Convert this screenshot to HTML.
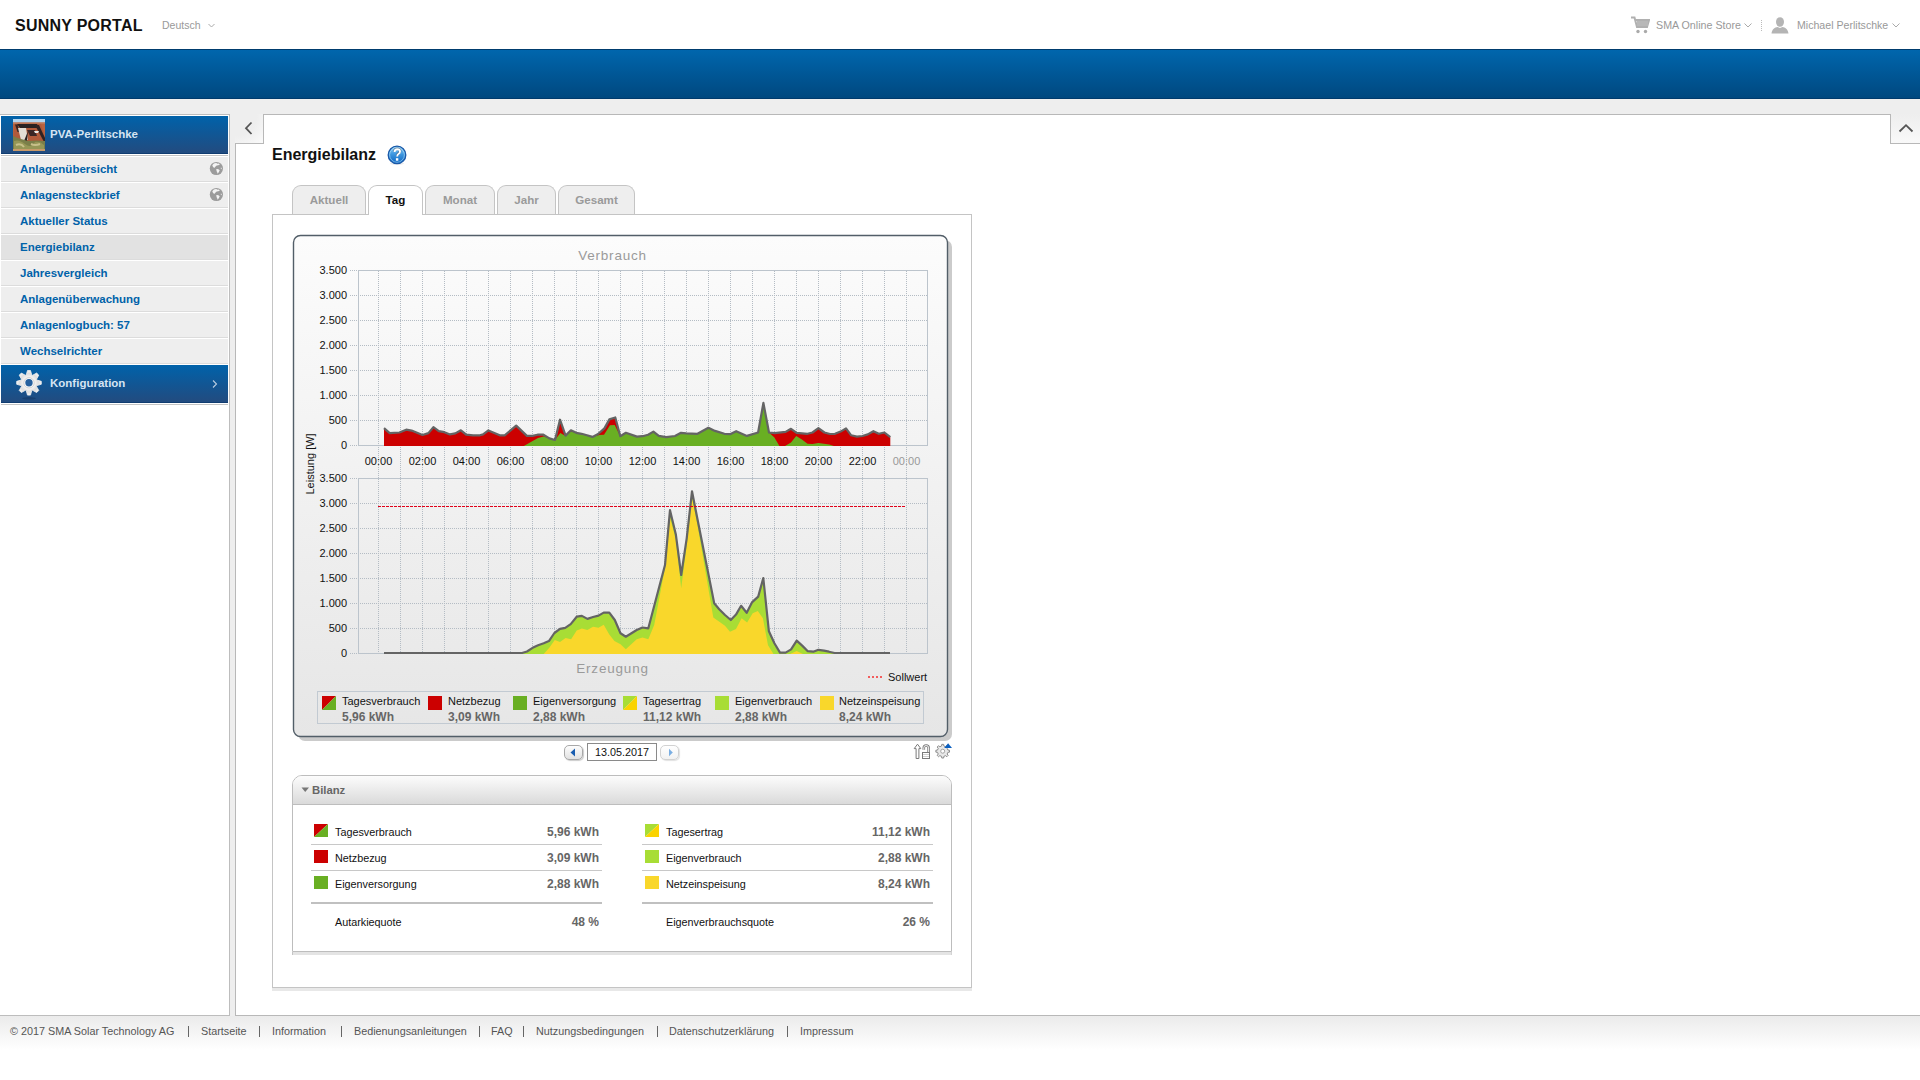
<!DOCTYPE html>
<html><head><meta charset="utf-8"><title>Sunny Portal</title>
<style>
*{box-sizing:border-box}
html,body{margin:0;padding:0;width:1920px;height:1080px;overflow:hidden;background:#fff;font-family:"Liberation Sans", sans-serif;}
.abs{position:absolute}
.yl{left:300px;width:47px;text-align:right;font-size:11px;line-height:12px;color:#111}
.xl{top:455px;width:40px;text-align:center;font-size:11px;line-height:12px}
.side a{position:absolute;left:20px;font-size:11.5px;font-weight:bold;color:#0062a9;text-decoration:none;line-height:14px}
.row{position:absolute;left:1px;width:227px;height:25px;background:#eeeeee;border-bottom:1px solid #dcdcdc}
.tab{position:absolute;top:185px;height:29px;border:1px solid #c4c4c4;border-bottom:none;border-radius:9px 9px 0 0;background:#eeeeee;font-size:11.6px;font-weight:bold;color:#9a9a9a;text-align:center;line-height:28px}
.lg{position:absolute;top:696px;width:14px;height:14px}
.lt{position:absolute;top:695px;font-size:11px;line-height:12px;color:#111;white-space:nowrap}
.lv{position:absolute;top:711px;font-size:12px;font-weight:bold;line-height:12px;color:#666;white-space:nowrap}
.bt{position:absolute;font-size:10.8px;line-height:12px;color:#111;white-space:nowrap}
.bv{position:absolute;font-size:12px;font-weight:bold;line-height:12px;color:#666;text-align:right;white-space:nowrap}
.bi{position:absolute;width:14px;height:13px}
.bl{position:absolute;height:1px;background:#c8c8c8}
.ft{position:absolute;top:1025px;font-size:10.8px;line-height:12px;color:#555;white-space:nowrap}
</style></head><body>

<!-- header -->
<div class="abs" style="left:15px;top:18px;font-size:16px;line-height:16px;font-weight:bold;color:#111;letter-spacing:0.25px">SUNNY PORTAL</div>
<div class="abs" style="left:162px;top:19px;font-size:10.5px;line-height:12px;color:#999">Deutsch</div>
<svg class="abs" style="left:206px;top:22px" width="10" height="8"><path d="M2.5 2L5.5 5L8.5 2" stroke="#aaa" stroke-width="1" fill="none"/></svg>

<svg class="abs" style="left:1631px;top:16px" width="19" height="18" viewBox="0 0 19 18"><path d="M0 1.5H3.5L6 11H16L18 4H5" stroke="#b0b0b0" stroke-width="2" fill="none"/><rect x="6" y="5" width="11" height="5" fill="#b8b8b8"/><circle cx="7" cy="15.5" r="1.7" fill="#aaa"/><circle cx="14.5" cy="15.5" r="1.7" fill="#aaa"/></svg>
<div class="abs" style="left:1656px;top:19px;font-size:10.7px;line-height:12px;color:#999">SMA Online Store</div>
<svg class="abs" style="left:1743px;top:21px" width="10" height="8"><path d="M1.5 2.5L5 6L8.5 2.5" stroke="#aaa" stroke-width="1" fill="none"/></svg>
<div class="abs" style="left:1761px;top:20px;width:1px;height:11px;border-left:1px dotted #bbb"></div>
<svg class="abs" style="left:1771px;top:17px" width="18" height="17" viewBox="0 0 18 17"><ellipse cx="9" cy="5" rx="4" ry="4.8" fill="#b4b4b4"/><path d="M0.5 16.5C1 12 4 10.5 6.5 10L9 11L11.5 10C14 10.5 17 12 17.5 16.5Z" fill="#b4b4b4"/></svg>
<div class="abs" style="left:1797px;top:19px;font-size:10.6px;line-height:12px;color:#999">Michael Perlitschke</div>
<svg class="abs" style="left:1891px;top:21px" width="10" height="8"><path d="M1.5 2.5L5 6L8.5 2.5" stroke="#aaa" stroke-width="1" fill="none"/></svg>

<!-- blue bar -->
<div class="abs" style="left:0;top:49px;width:1920px;height:50px;background:linear-gradient(#0066ad,#00487f);border-top:1px solid #003c6e;border-bottom:1px solid #003a6c"></div>
<!-- gray page -->
<div class="abs" style="left:0;top:99px;width:1920px;height:917px;background:#eeeeee"></div>

<!-- sidebar -->
<div class="abs side" style="left:0;top:114px;width:230px;height:902px;background:#fff;border-top:1px solid #bdbdbd;border-right:1px solid #bdbdbd;border-bottom:1px solid #bdbdbd">
</div>
<div class="abs" style="left:1px;top:116px;width:227px;height:38px;background:linear-gradient(#0062aa,#224b7f);border-bottom:1px solid #103c70"></div>
<svg class="abs" style="left:13px;top:119px" width="32" height="32" viewBox="0 0 32 32">
<defs><filter id="bl" x="0" y="0" width="1" height="1"><feGaussianBlur stdDeviation="0.45"/></filter></defs><g filter="url(#bl)">
<rect width="32" height="32" fill="#b9643f"/><rect width="32" height="3.5" fill="#b4d6f0"/>
<path d="M0 3.5H32V5Q20 4 0 5Z" fill="#c07a5a"/>
<path d="M1 5H28L32 18V22L0 24Z" fill="#b15a3a"/>
<path d="M2 5.5H4.5L7 13H4.5Z" fill="#3a2624"/>
<path d="M4 5H24L26 9H7Z" fill="#2a2020"/>
<path d="M22 6H26L32 19V23H31Z" fill="#302424"/>
<path d="M14 11H22L24 17H17Z" fill="#3a2828"/>
<path d="M5 9H13L15 21H8Z" fill="#e2ddd4"/><path d="M15 12L14 22H11Z" fill="#2a2222"/>
<path d="M21 12H26L25 14H22Z" fill="#eeeae6"/>
<path d="M0 17Q4 19 8 20L15 22Q23 21 32 22V32H0Z" fill="#7a7e48"/>
<path d="M1 22Q6 20 12 25T22 23Q27 22 31 26V30H1Z" fill="#959656"/>
<path d="M3 26Q8 24 11 28M18 25Q22 27 27 25" stroke="#c8c08a" stroke-width="2" fill="none"/>
<rect y="30" width="32" height="2" fill="#c89a6a"/>
</g></svg>
<div class="abs" style="left:50px;top:127px;font-size:11.5px;font-weight:bold;line-height:14px;color:#d6e4f2">PVA-Perlitschke</div>
<div class="abs" style="left:1px;top:155px;width:227px;height:1px;background:#c4c4c4"></div>
<div class="row" style="top:157px;background:#eeeeee"></div>
<div class="side"><a style="top:162px">Anlagenübersicht</a></div>
<svg class="abs" style="left:209px;top:161px" width="15" height="15" viewBox="0 0 15 15"><circle cx="7.4" cy="7.5" r="6.6" fill="#9c9c9c"/><path d="M3.3 4.2Q4.6 1.9 7.2 2L8.6 2.7Q10 2.2 10.9 3.4L9.3 4.3Q7.4 4.3 6.8 5.2L5.2 6.9Q3.6 5.8 3.3 4.2Z M7.3 8Q9.1 7.6 10.7 9.2Q10.1 11.2 8.4 12.8Q8.5 11 7.6 10.2Z M11.9 6.6L12.7 6.9L12.6 8.2L11.8 7.8Z" fill="#f4f4f4"/></svg>
<div class="row" style="top:183px;background:#eeeeee"></div>
<div class="side"><a style="top:188px">Anlagensteckbrief</a></div>
<svg class="abs" style="left:209px;top:187px" width="15" height="15" viewBox="0 0 15 15"><circle cx="7.4" cy="7.5" r="6.6" fill="#9c9c9c"/><path d="M3.3 4.2Q4.6 1.9 7.2 2L8.6 2.7Q10 2.2 10.9 3.4L9.3 4.3Q7.4 4.3 6.8 5.2L5.2 6.9Q3.6 5.8 3.3 4.2Z M7.3 8Q9.1 7.6 10.7 9.2Q10.1 11.2 8.4 12.8Q8.5 11 7.6 10.2Z M11.9 6.6L12.7 6.9L12.6 8.2L11.8 7.8Z" fill="#f4f4f4"/></svg>
<div class="row" style="top:209px;background:#eeeeee"></div>
<div class="side"><a style="top:214px">Aktueller Status</a></div>
<div class="row" style="top:235px;background:#e2e2e2"></div>
<div class="side"><a style="top:240px">Energiebilanz</a></div>
<div class="row" style="top:261px;background:#eeeeee"></div>
<div class="side"><a style="top:266px">Jahresvergleich</a></div>
<div class="row" style="top:287px;background:#eeeeee"></div>
<div class="side"><a style="top:292px">Anlagenüberwachung</a></div>
<div class="row" style="top:313px;background:#eeeeee"></div>
<div class="side"><a style="top:318px">Anlagenlogbuch: 57</a></div>
<div class="row" style="top:339px;background:#eeeeee"></div>
<div class="side"><a style="top:344px">Wechselrichter</a></div>
<div class="abs" style="left:1px;top:365px;width:227px;height:38px;background:linear-gradient(#0062aa,#224b7f);border-bottom:1px solid #103c70"></div>
<svg class="abs" style="left:14px;top:367px" width="30" height="34" viewBox="14 367 30 34"><defs><radialGradient id="gr" cx="0.5" cy="0.5" r="0.5"><stop offset="0.3" stop-color="#ffffff"/><stop offset="0.75" stop-color="#dedede"/><stop offset="1" stop-color="#f4f4f4"/></radialGradient></defs><ellipse cx="29" cy="398.3" rx="7" ry="1.3" fill="#0c2a50" opacity="0.35"/><path d="M26.23 374.98 L27.52 370.49 L30.48 370.49 L31.77 374.98 L32.58 375.31 L36.66 373.05 L38.75 375.14 L36.49 379.22 L36.82 380.03 L41.31 381.32 L41.31 384.28 L36.82 385.57 L36.49 386.38 L38.75 390.46 L36.66 392.55 L32.58 390.29 L31.77 390.62 L30.48 395.11 L27.52 395.11 L26.23 390.62 L25.42 390.29 L21.34 392.55 L19.25 390.46 L21.51 386.38 L21.18 385.57 L16.69 384.28 L16.69 381.32 L21.18 380.03 L21.51 379.22 L19.25 375.14 L21.34 373.05 L25.42 375.31Z" fill="url(#gr)" stroke="#f0f0f0" stroke-width="0.8" stroke-linejoin="round"/><circle cx="29" cy="382.8" r="3.7" fill="#25609e"/><circle cx="29" cy="382.8" r="5.2" fill="none" stroke="#c8c8c8" stroke-width="0.8"/></svg>
<div class="abs" style="left:50px;top:376px;font-size:11.5px;font-weight:bold;line-height:14px;color:#d6e4f2">Konfiguration</div>
<svg class="abs" style="left:211px;top:379px" width="8" height="10"><path d="M2 1.5L5.5 5L2 8.5" stroke="#b8cce0" stroke-width="1.1" fill="none"/></svg>
<div class="abs" style="left:1px;top:404px;width:227px;height:1px;background:#c4c4c4"></div>

<!-- content panel -->
<div class="abs" style="left:235px;top:143px;width:1685px;height:873px;background:#fff;border-left:1px solid #b8b8b8;border-bottom:1px solid #b8b8b8"></div>
<div class="abs" style="left:263px;top:114px;width:1628px;height:30px;background:#fff;border-top:1px solid #b8b8b8;border-left:1px solid #b8b8b8;border-right:1px solid #b8b8b8"></div>
<div class="abs" style="left:235px;top:114px;width:28px;height:30px;background:radial-gradient(circle at 0 0,#eeeeee 55%,#fdfdfd 110%);border-bottom:1px solid #b8b8b8"></div>
<svg class="abs" style="left:243px;top:121px" width="12" height="15"><path d="M8.5 1.5L3 7.2L8.5 13" stroke="#555" stroke-width="1.8" fill="none"/></svg>
<div class="abs" style="left:1891px;top:114px;width:29px;height:30px;background:linear-gradient(#eeeeee,#f9f9f9);border-bottom:1px solid #b8b8b8"></div>
<svg class="abs" style="left:1898px;top:122px" width="16" height="12"><path d="M1.5 9.5L8 3.2L14.5 9.5" stroke="#555" stroke-width="1.8" fill="none"/></svg>

<!-- title -->
<div class="abs" style="left:272px;top:146px;font-size:16px;line-height:18px;font-weight:bold;color:#111">Energiebilanz</div>
<svg class="abs" style="left:382px;top:140px" width="30" height="30" viewBox="382 140 30 30">
<defs><linearGradient id="hg" x1="0" y1="0" x2="0" y2="1"><stop offset="0" stop-color="#8fd0f8"/><stop offset="0.45" stop-color="#3f98e0"/><stop offset="1" stop-color="#0a62c0"/></linearGradient></defs>
<ellipse cx="397" cy="163.5" rx="7" ry="1.5" fill="#000" opacity="0.08"/>
<circle cx="397" cy="154.9" r="8.8" fill="url(#hg)" stroke="#1958a8" stroke-width="1.3"/>
<circle cx="397" cy="154.9" r="7.4" fill="none" stroke="#c8f0ff" stroke-width="0.9" opacity="0.55"/>
<path d="M394.6 152Q394.6 149.3 397.3 149.3Q400 149.3 400 151.6Q400 153.2 398.4 154Q397.2 154.7 397.2 156.6" stroke="#334" stroke-width="2.6" fill="none" opacity="0.55" transform="translate(0,-0.5)"/>
<path d="M394.6 152Q394.6 149.3 397.3 149.3Q400 149.3 400 151.6Q400 153.2 398.4 154Q397.2 154.7 397.2 156.6" stroke="#fff" stroke-width="1.9" fill="none"/>
<rect x="395.9" y="158.2" width="2.4" height="2.5" fill="#fff"/>
</svg>

<!-- tab panel -->
<div class="abs" style="left:272px;top:214px;width:700px;height:774px;background:#fff;border:1px solid #c4c4c4"></div>
<div class="abs" style="left:272px;top:988px;width:700px;height:3px;background:#e8e8e8"></div>
<div class="tab" style="left:292px;width:74px">Aktuell</div>
<div class="tab" style="left:368px;width:55px;background:#fff;color:#111;height:30px">Tag</div>
<div class="abs" style="left:369px;top:214px;width:53px;height:1px;background:#fff"></div>
<div class="tab" style="left:425px;width:70px">Monat</div>
<div class="tab" style="left:497px;width:59px">Jahr</div>
<div class="tab" style="left:558px;width:77px">Gesamt</div>
<svg class="abs" style="left:0;top:0" width="1920" height="1080" viewBox="0 0 1920 1080">
<defs><linearGradient id="pg" x1="0" y1="0" x2="0" y2="1"><stop offset="0" stop-color="#fcfcfc"/><stop offset="1" stop-color="#e6e6e6"/></linearGradient></defs>
<rect x="298" y="240" width="654" height="501" rx="7" fill="#cbcbcb"/>
<rect x="293.5" y="235.5" width="654" height="501" rx="7" fill="url(#pg)" stroke="#525e68" stroke-width="1.4"/>
<rect x="358.5" y="270.5" width="569" height="175" fill="none" stroke="#bcc4cc" stroke-width="1"/>
<rect x="358.5" y="478.5" width="569" height="175" fill="none" stroke="#bcc4cc" stroke-width="1"/>
<path d="M360 295.5H927 M360 320.5H927 M360 345.5H927 M360 370.5H927 M360 395.5H927 M360 420.5H927 M350 270.5H358 M350 295.5H358 M350 320.5H358 M350 345.5H358 M350 370.5H358 M350 395.5H358 M350 420.5H358 M350 445.5H358 M360 503.5H927 M360 528.5H927 M360 553.5H927 M360 578.5H927 M360 603.5H927 M360 628.5H927 M350 478.5H358 M350 503.5H358 M350 528.5H358 M350 553.5H358 M350 578.5H358 M350 603.5H358 M350 628.5H358 M350 653.5H358 M378.5 271V653 M400.5 271V653 M422.5 271V653 M444.5 271V653 M466.5 271V653 M488.5 271V653 M510.5 271V653 M532.5 271V653 M554.5 271V653 M576.5 271V653 M598.5 271V653 M620.5 271V653 M642.5 271V653 M664.5 271V653 M686.5 271V653 M708.5 271V653 M730.5 271V653 M752.5 271V653 M774.5 271V653 M796.5 271V653 M818.5 271V653 M840.5 271V653 M862.5 271V653 M884.5 271V653 M906.5 271V653" stroke="#b4bcc4" stroke-width="1" stroke-dasharray="1 1" fill="none"/>
<polygon points="384.0,446.0 384.0,428.1 389.7,433.1 399.4,432.5 406.2,429.7 411.6,430.6 422.5,435.0 428.4,433.1 433.4,427.2 438.8,431.2 444.4,432.2 450.0,434.4 455.3,433.4 460.9,430.3 466.2,434.7 473.1,435.3 480.0,435.3 483.1,434.4 488.4,430.4 499.7,435.3 504.7,435.3 516.2,425.6 526.9,435.9 532.5,435.9 537.5,434.7 543.4,434.7 549.4,438.4 555.0,440.0 560.0,419.7 565.6,435.6 570.9,430.3 576.2,432.8 581.6,433.8 586.9,435.3 592.5,436.9 598.1,434.0 604.4,428.4 609.4,419.4 615.3,417.5 620.3,436.2 625.9,432.8 636.9,436.6 642.5,436.2 648.1,434.7 653.4,431.6 658.8,435.9 666.2,437.2 675.0,436.0 681.0,432.8 686.2,433.4 697.5,433.8 708.4,427.8 715.0,430.9 724.4,433.8 730.6,434.1 736.2,431.2 746.9,435.9 758.1,432.5 763.4,402.9 769.0,432.5 774.7,433.1 785.6,431.9 791.0,428.8 796.6,432.8 807.5,433.8 812.5,432.5 818.4,428.1 824.4,432.5 830.0,434.0 835.0,433.8 840.6,431.6 846.0,428.4 851.2,435.3 856.9,436.6 862.5,436.0 867.8,434.4 873.4,431.2 878.8,433.8 884.4,432.5 890.3,437.2 890.3,446.0" fill="#cc0000"/>
<polygon points="384.0,446.0 384.0,446.0 520.0,446.0 523.8,446.0 538.0,438.1 543.8,436.6 549.4,438.4 555.0,440.0 560.3,433.1 565.6,436.0 570.9,431.6 576.2,432.8 581.6,433.8 586.9,435.3 592.5,436.9 599.4,434.9 604.0,434.7 610.0,425.3 614.7,425.0 620.3,436.6 625.9,432.8 636.9,436.6 642.5,436.2 648.1,434.7 653.4,431.6 658.8,435.9 666.2,437.2 675.0,436.0 681.0,432.8 686.2,433.4 697.5,433.8 708.4,427.8 715.0,430.9 724.4,433.8 730.6,434.1 736.2,431.2 746.9,435.9 758.1,432.5 763.4,405.0 769.0,432.5 774.4,437.5 779.4,446.0 785.0,446.0 791.0,442.5 796.2,436.0 801.9,439.4 807.5,443.8 812.5,444.0 818.4,443.1 829.4,444.4 833.8,446.0 890.3,446.0 890.3,446.0" fill="#69af23"/>
<polyline points="384.0,428.1 389.7,433.1 399.4,432.5 406.2,429.7 411.6,430.6 422.5,435.0 428.4,433.1 433.4,427.2 438.8,431.2 444.4,432.2 450.0,434.4 455.3,433.4 460.9,430.3 466.2,434.7 473.1,435.3 480.0,435.3 483.1,434.4 488.4,430.4 499.7,435.3 504.7,435.3 516.2,425.6 526.9,435.9 532.5,435.9 537.5,434.7 543.4,434.7 549.4,438.4 555.0,440.0 560.0,419.7 565.6,435.6 570.9,430.3 576.2,432.8 581.6,433.8 586.9,435.3 592.5,436.9 598.1,434.0 604.4,428.4 609.4,419.4 615.3,417.5 620.3,436.2 625.9,432.8 636.9,436.6 642.5,436.2 648.1,434.7 653.4,431.6 658.8,435.9 666.2,437.2 675.0,436.0 681.0,432.8 686.2,433.4 697.5,433.8 708.4,427.8 715.0,430.9 724.4,433.8 730.6,434.1 736.2,431.2 746.9,435.9 758.1,432.5 763.4,402.9 769.0,432.5 774.7,433.1 785.6,431.9 791.0,428.8 796.6,432.8 807.5,433.8 812.5,432.5 818.4,428.1 824.4,432.5 830.0,434.0 835.0,433.8 840.6,431.6 846.0,428.4 851.2,435.3 856.9,436.6 862.5,436.0 867.8,434.4 873.4,431.2 878.8,433.8 884.4,432.5 890.3,437.2" fill="none" stroke="#646464" stroke-width="2.2" stroke-linejoin="round"/>
<polygon points="384.0,654.0 384.0,653.0 522.0,653.0 527.0,651.5 532.6,647.8 538.1,645.2 543.7,643.3 548.9,641.1 554.4,633.0 560.0,628.9 565.2,627.8 570.7,624.1 576.7,616.7 581.9,615.9 587.4,618.9 593.0,617.0 598.5,615.6 603.7,612.6 609.3,612.6 614.8,620.0 620.5,633.3 625.8,636.7 636.7,630.0 642.5,627.5 648.3,628.3 665.0,565.0 670.0,510.2 675.8,534.2 681.2,575.0 686.7,538.3 692.0,491.3 697.5,519.2 714.2,603.3 719.2,609.2 725.0,615.0 730.8,620.0 736.0,614.6 741.1,605.8 746.7,612.8 752.2,602.1 758.2,596.6 763.3,578.0 768.9,631.3 774.4,643.3 780.0,652.6 785.6,652.6 791.1,649.4 796.7,640.6 802.2,645.6 807.8,651.2 813.3,651.7 818.4,649.8 824.0,650.7 829.0,651.7 834.6,653.0 890.0,653.0 890.0,654.0" fill="#a8dd35"/>
<polygon points="384.0,654.0 384.0,654.0 543.7,654.0 549.3,647.8 554.8,640.0 560.0,641.9 565.6,638.1 571.1,639.3 576.7,630.4 581.9,628.5 587.4,630.0 593.0,626.7 598.5,627.8 603.7,624.8 609.3,634.4 614.4,641.1 620.5,644.2 625.8,649.2 636.7,639.2 642.5,637.5 648.3,639.2 654.2,625.0 665.0,568.0 670.0,517.5 675.8,539.2 681.2,588.3 686.7,545.0 692.0,498.0 697.5,525.0 713.3,617.5 725.0,625.8 730.0,631.7 736.0,629.0 741.6,618.3 747.1,622.5 752.7,613.2 757.8,611.0 762.9,618.3 768.0,645.2 773.5,654.0 790.0,654.0 796.7,651.0 803.0,654.0 890.0,654.0 890.0,654.0" fill="#f9d72b"/>
<polyline points="384.0,653.0 522.0,653.0 527.0,651.5 532.6,647.8 538.1,645.2 543.7,643.3 548.9,641.1 554.4,633.0 560.0,628.9 565.2,627.8 570.7,624.1 576.7,616.7 581.9,615.9 587.4,618.9 593.0,617.0 598.5,615.6 603.7,612.6 609.3,612.6 614.8,620.0 620.5,633.3 625.8,636.7 636.7,630.0 642.5,627.5 648.3,628.3 665.0,565.0 670.0,510.2 675.8,534.2 681.2,575.0 686.7,538.3 692.0,491.3 697.5,519.2 714.2,603.3 719.2,609.2 725.0,615.0 730.8,620.0 736.0,614.6 741.1,605.8 746.7,612.8 752.2,602.1 758.2,596.6 763.3,578.0 768.9,631.3 774.4,643.3 780.0,652.6 785.6,652.6 791.1,649.4 796.7,640.6 802.2,645.6 807.8,651.2 813.3,651.7 818.4,649.8 824.0,650.7 829.0,651.7 834.6,653.0 890.0,653.0" fill="none" stroke="#646464" stroke-width="2.2" stroke-linejoin="round"/>
<path d="M378 506.5H906" stroke="#e00018" stroke-width="1.2" stroke-dasharray="3 1"/>
<path d="M868 677H884" stroke="#f25c5c" stroke-width="2" stroke-dasharray="2 2"/>
</svg>
<div class="abs yl" style="top:264px">3.500</div>
<div class="abs yl" style="top:289px">3.000</div>
<div class="abs yl" style="top:314px">2.500</div>
<div class="abs yl" style="top:339px">2.000</div>
<div class="abs yl" style="top:364px">1.500</div>
<div class="abs yl" style="top:389px">1.000</div>
<div class="abs yl" style="top:414px">500</div>
<div class="abs yl" style="top:439px">0</div>
<div class="abs yl" style="top:472px">3.500</div>
<div class="abs yl" style="top:497px">3.000</div>
<div class="abs yl" style="top:522px">2.500</div>
<div class="abs yl" style="top:547px">2.000</div>
<div class="abs yl" style="top:572px">1.500</div>
<div class="abs yl" style="top:597px">1.000</div>
<div class="abs yl" style="top:622px">500</div>
<div class="abs yl" style="top:647px">0</div>
<div class="abs xl" style="left:358.5px;color:#111">00:00</div>
<div class="abs xl" style="left:402.5px;color:#111">02:00</div>
<div class="abs xl" style="left:446.5px;color:#111">04:00</div>
<div class="abs xl" style="left:490.5px;color:#111">06:00</div>
<div class="abs xl" style="left:534.5px;color:#111">08:00</div>
<div class="abs xl" style="left:578.5px;color:#111">10:00</div>
<div class="abs xl" style="left:622.5px;color:#111">12:00</div>
<div class="abs xl" style="left:666.5px;color:#111">14:00</div>
<div class="abs xl" style="left:710.5px;color:#111">16:00</div>
<div class="abs xl" style="left:754.5px;color:#111">18:00</div>
<div class="abs xl" style="left:798.5px;color:#111">20:00</div>
<div class="abs xl" style="left:842.5px;color:#111">22:00</div>
<div class="abs xl" style="left:886.5px;color:#999">00:00</div>

<div class="abs" style="left:555px;top:248px;width:115px;text-align:center;font-size:13.5px;line-height:16px;color:#9a9a9a;letter-spacing:0.8px">Verbrauch</div>
<div class="abs" style="left:555px;top:661px;width:115px;text-align:center;font-size:13.5px;line-height:16px;color:#9a9a9a;letter-spacing:0.8px">Erzeugung</div>
<div class="abs" style="left:279px;top:458px;width:61px;text-align:center;font-size:11px;line-height:12px;color:#111;transform:rotate(-90deg);white-space:nowrap">Leistung [W]</div>
<div class="abs" style="left:888px;top:671px;font-size:11px;line-height:12px;color:#111">Sollwert</div>

<!-- legend -->
<div class="abs" style="left:317px;top:691px;width:607px;height:33px;border:1px solid #c2cad2"></div>
<svg class="lg" style="left:322px" viewBox="0 0 14 14"><path d="M0 0H14L0 14Z" fill="#cc0000"/><path d="M14 0V14H0Z" fill="#69af23"/></svg>
<div class="lt" style="left:342px">Tagesverbrauch</div><div class="lv" style="left:342px">5,96 kWh</div>
<div class="lg" style="left:428px;background:#cc0000"></div>
<div class="lt" style="left:448px">Netzbezug</div><div class="lv" style="left:448px">3,09 kWh</div>
<div class="lg" style="left:513px;background:#69af23"></div>
<div class="lt" style="left:533px">Eigenversorgung</div><div class="lv" style="left:533px">2,88 kWh</div>
<svg class="lg" style="left:623px" viewBox="0 0 14 14"><path d="M0 0H14L0 14Z" fill="#a8dd35"/><path d="M14 0V14H0Z" fill="#fad300"/></svg>
<div class="lt" style="left:643px">Tagesertrag</div><div class="lv" style="left:643px">11,12 kWh</div>
<div class="lg" style="left:715px;background:#a8dd35"></div>
<div class="lt" style="left:735px">Eigenverbrauch</div><div class="lv" style="left:735px">2,88 kWh</div>
<div class="lg" style="left:820px;background:#f9d72b"></div>
<div class="lt" style="left:839px">Netzeinspeisung</div><div class="lv" style="left:839px">8,24 kWh</div>

<!-- date nav -->
<div class="abs" style="left:564px;top:745px;width:19px;height:15px;border:1px solid #a8a8a8;border-radius:5px;background:linear-gradient(#fdfdfd,#e2e2e2);box-shadow:1px 1px 1px #ccc"></div>
<svg class="abs" style="left:569px;top:748px" width="8" height="9"><path d="M6 0.5V8.5L1.5 4.5Z" fill="#1a5eb0"/></svg>
<div class="abs" style="left:587px;top:743px;width:70px;height:18px;border:1px solid #8a8a8a;background:#fff;font-size:10.8px;line-height:16px;color:#111;text-align:center">13.05.2017</div>
<div class="abs" style="left:660px;top:745px;width:19px;height:15px;border:1px solid #d2d2d2;border-radius:5px;background:linear-gradient(#ffffff,#f2f2f2);box-shadow:1px 1px 1px #e2e2e2"></div>
<svg class="abs" style="left:667px;top:748px" width="8" height="9"><path d="M2 0.8V8.2L5.8 4.5Z" fill="#7aaee2"/></svg>
<svg class="abs" style="left:0;top:0" width="1920" height="1080" viewBox="0 0 1920 1080">
<path d="M917.5 744.2L920.8 748.6H918.9V758.5H916.1V748.6H914.2Z" fill="#fff" stroke="#7a7a7a" stroke-width="1"/>
<path d="M923.8 749.8V747.8Q923.8 745.5 926.2 745.5Q928.6 745.5 928.6 747.8V752" fill="none" stroke="#7a7a7a" stroke-width="2.6"/>
<path d="M923.8 749.8V747.8Q923.8 745.5 926.2 745.5Q928.6 745.5 928.6 747.8V752" fill="none" stroke="#fff" stroke-width="0.9"/>
<rect x="922.5" y="752.5" width="7" height="6" fill="#fff" stroke="#7a7a7a" stroke-width="1"/>
<path d="M923 754.5H929M923 756.5H929" stroke="#cfcfcf" stroke-width="1"/>
<path d="M947.88 750.06 L949.53 750.25 L949.53 752.15 L947.88 752.34 L947.16 754.06 L948.20 755.36 L946.86 756.70 L945.56 755.66 L943.84 756.38 L943.65 758.03 L941.75 758.03 L941.56 756.38 L939.84 755.66 L938.54 756.70 L937.20 755.36 L938.24 754.06 L937.52 752.34 L935.87 752.15 L935.87 750.25 L937.52 750.06 L938.24 748.34 L937.20 747.04 L938.54 745.70 L939.84 746.74 L941.56 746.02 L941.75 744.37 L943.65 744.37 L943.84 746.02 L945.56 746.74 L946.86 745.70 L948.20 747.04 L947.16 748.34Z" fill="#e8e8e8" stroke="#8c8c8c" stroke-width="1" stroke-linejoin="round"/><circle cx="942.7" cy="751.2" r="2" fill="#fff" stroke="#9a9a9a" stroke-width="0.9"/>
<path d="M944.2 747.9L948.1 743.2L952 747.9Z" fill="#0a5fc0"/>
</svg>

<!-- bilanz -->
<div class="abs" style="left:292px;top:775px;width:660px;height:177px;border:1px solid #bdbdbd;border-radius:10px 10px 0 0;background:#fff;overflow:hidden">
  <div style="height:29px;background:linear-gradient(#fcfcfc,#dadada);border-bottom:1px solid #bdbdbd"></div>
</div>
<div class="abs" style="left:292px;top:952px;width:660px;height:3px;background:#e4e4e4;border-left:1px solid #c4c4c4;border-right:1px solid #d4d4d4"></div>
<svg class="abs" style="left:301px;top:787px" width="9" height="6"><path d="M0.5 0.5H8L4.2 5Z" fill="#777"/></svg>
<div class="abs" style="left:312px;top:784px;font-size:11.3px;font-weight:bold;line-height:13px;color:#666">Bilanz</div>
<svg class="bi" style="left:314px;top:824px" viewBox="0 0 14 13"><path d="M0 0H14L0 13Z" fill="#cc0000"/><path d="M14 0V13H0Z" fill="#69af23"/></svg>
<div class="bt" style="left:335px;top:826px">Tagesverbrauch</div>
<div class="bv" style="left:499px;width:100px;top:826px">5,96 kWh</div>
<svg class="bi" style="left:645px;top:824px" viewBox="0 0 14 13"><path d="M0 0H14L0 13Z" fill="#a8dd35"/><path d="M14 0V13H0Z" fill="#fad300"/></svg>
<div class="bt" style="left:666px;top:826px">Tagesertrag</div>
<div class="bv" style="left:830px;width:100px;top:826px">11,12 kWh</div>
<div class="bi" style="left:314px;top:850px;background:#cc0000"></div>
<div class="bt" style="left:335px;top:852px">Netzbezug</div>
<div class="bv" style="left:499px;width:100px;top:852px">3,09 kWh</div>
<div class="bi" style="left:645px;top:850px;background:#a8dd35"></div>
<div class="bt" style="left:666px;top:852px">Eigenverbrauch</div>
<div class="bv" style="left:830px;width:100px;top:852px">2,88 kWh</div>
<div class="bi" style="left:314px;top:876px;background:#69af23"></div>
<div class="bt" style="left:335px;top:878px">Eigenversorgung</div>
<div class="bv" style="left:499px;width:100px;top:878px">2,88 kWh</div>
<div class="bi" style="left:645px;top:876px;background:#f9d72b"></div>
<div class="bt" style="left:666px;top:878px">Netzeinspeisung</div>
<div class="bv" style="left:830px;width:100px;top:878px">8,24 kWh</div>
<div class="bt" style="left:335px;top:916px">Autarkiequote</div>
<div class="bv" style="left:499px;width:100px;top:916px">48 %</div>
<div class="bt" style="left:666px;top:916px">Eigenverbrauchsquote</div>
<div class="bv" style="left:830px;width:100px;top:916px">26 %</div>
<div class="bl" style="left:311px;top:844px;width:291px"></div>
<div class="bl" style="left:642px;top:844px;width:291px"></div>
<div class="bl" style="left:311px;top:870px;width:291px"></div>
<div class="bl" style="left:642px;top:870px;width:291px"></div>
<div class="bl" style="left:311px;top:902px;width:291px;height:2px;background:#c0c0c0"></div>
<div class="bl" style="left:642px;top:902px;width:291px;height:2px;background:#c0c0c0"></div>
<!-- footer -->
<div class="abs" style="left:0;top:1016px;width:1920px;height:64px;background:linear-gradient(#ebebeb 0px,#ffffff 34px)"></div>
<div class="ft" style="left:10px">© 2017 SMA Solar Technology AG</div>
<div class="abs" style="left:188px;top:1026px;width:1px;height:11px;background:#666"></div>
<div class="ft" style="left:201px">Startseite</div>
<div class="abs" style="left:259px;top:1026px;width:1px;height:11px;background:#666"></div>
<div class="ft" style="left:272px">Information</div>
<div class="abs" style="left:341px;top:1026px;width:1px;height:11px;background:#666"></div>
<div class="ft" style="left:354px">Bedienungsanleitungen</div>
<div class="abs" style="left:479px;top:1026px;width:1px;height:11px;background:#666"></div>
<div class="ft" style="left:491px">FAQ</div>
<div class="abs" style="left:523px;top:1026px;width:1px;height:11px;background:#666"></div>
<div class="ft" style="left:536px">Nutzungsbedingungen</div>
<div class="abs" style="left:657px;top:1026px;width:1px;height:11px;background:#666"></div>
<div class="ft" style="left:669px">Datenschutzerklärung</div>
<div class="abs" style="left:787px;top:1026px;width:1px;height:11px;background:#666"></div>
<div class="ft" style="left:800px">Impressum</div>
</body></html>
